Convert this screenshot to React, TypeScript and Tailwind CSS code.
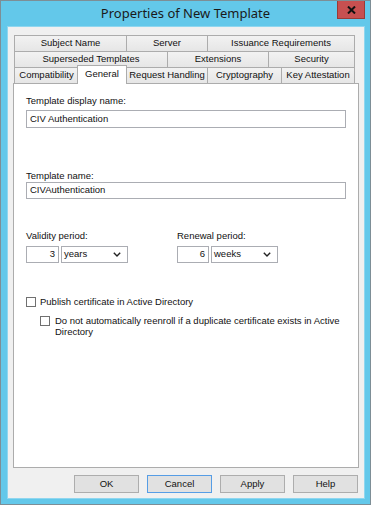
import React from 'react';

const UI = "font-['Liberation_Sans',Arial,sans-serif] text-[9.5px] text-[#111]";

type Tab = { label: string; w: number; selected?: boolean };

const ROW1: Tab[] = [
  { label: 'Subject Name', w: 112 },
  { label: 'Server', w: 81 },
  { label: 'Issuance Requirements', w: 148 },
];
const ROW2: Tab[] = [
  { label: 'Superseded Templates', w: 153 },
  { label: 'Extensions', w: 101 },
  { label: 'Security', w: 87 },
];
const ROW3: Tab[] = [
  { label: 'Compatibility', w: 64 },
  { label: 'General', w: 48, selected: true },
  { label: 'Request Handling', w: 81 },
  { label: 'Cryptography', w: 74 },
  { label: 'Key Attestation', w: 74 },
];

function TabRow({ tabs }: { tabs: Tab[] }) {
  return (
    <div className="flex h-[16px] items-start">
      {tabs.map((t, i) =>
        t.selected ? (
          <div
            key={t.label}
            style={{ width: t.w + 2 }}
            className="relative z-10 -mx-px -mt-[2px] flex h-[19px] items-center justify-center border-x border-t border-[#acacac] bg-white pb-[2px]"
          >
            {t.label}
          </div>
        ) : (
          <div
            key={t.label}
            style={{ width: t.w }}
            className={`flex h-[16px] items-center justify-center border-l border-t border-[#acacac] bg-gradient-to-b from-[#f2f2f2] to-[#e6e6e6] ${
              i === tabs.length - 1 ? 'border-r' : ''
            }`}
          >
            {t.label}
          </div>
        ),
      )}
    </div>
  );
}

function Chevron() {
  return (
    <svg width="8" height="5" viewBox="0 0 8 5" className="shrink-0">
      <path d="M0.8 0.8 L4 4 L7.2 0.8" fill="none" stroke="#222" strokeWidth="1.4" />
    </svg>
  );
}

function Period({ value, unit, numW }: { value: string; unit: string; numW: number }) {
  return (
    <div className="flex h-[17px] gap-[2px]">
      <div
        style={{ width: numW }}
        className="flex items-center justify-end border border-[#abadb3] bg-white pr-[3px]"
      >
        {value}
      </div>
      <div className="flex w-[67px] items-center justify-between border border-[#abadb3] bg-white pl-[2px] pr-[6px]">
        <span>{unit}</span>
        <Chevron />
      </div>
    </div>
  );
}

function Checkbox() {
  return <div className="mt-[1px] h-[10px] w-[10px] shrink-0 border border-[#707070] bg-white" />;
}

function Button({ label, focused }: { label: string; focused?: boolean }) {
  return (
    <div
      className={`flex h-[18px] w-[65px] items-center justify-center border bg-[#e1e1e1] ${
        focused ? 'border-[#569de5]' : 'border-[#adadad]'
      }`}
    >
      {label}
    </div>
  );
}

export default function App() {
  return (
    <div className={`flex h-[505px] w-[371px] flex-col border border-[#7d8e96] bg-[#63c8ea] ${UI}`}>
      <div className="relative flex h-[25px] shrink-0 items-center justify-center">
        <span className="font-['Noto_Sans',sans-serif] text-[13px] leading-none text-[#1a1a1a]">
          Properties of New Template
        </span>
        <div className="absolute right-[5px] top-0 flex h-[18px] w-[28px] items-center justify-center border border-t-0 border-[#9a3b36] bg-[#c75050]">
          <svg width="9" height="8" viewBox="0 0 9 8">
            <path d="M1 0.5 L8 7.5 M8 0.5 L1 7.5" stroke="#111" strokeWidth="2" />
          </svg>
        </div>
      </div>

      <div className="ml-[6px] mr-[5px] flex h-[473px] flex-col border border-[#8fd6ef] bg-[#f0f0f0] px-[5px] pb-[5px] pt-[8px]">
        <div className="ml-px">
          <TabRow tabs={ROW1} />
          <TabRow tabs={ROW2} />
          <TabRow tabs={ROW3} />
        </div>

        <div className="flex h-[385px] flex-col border border-[#acacac] bg-white px-[12px]">
          <div className="mt-[11px] h-[12px] leading-[12px]">Template display name:</div>
          <div className="mt-[3px] flex h-[18px] w-[320px] items-center border border-[#abadb3] pl-[3px]">
            CIV Authentication
          </div>

          <div className="mt-[42px] h-[12px] leading-[12px]">Template name:</div>
          <div className="flex h-[17px] w-[320px] items-center border border-[#abadb3] pl-[3px]">
            CIVAuthentication
          </div>

          <div className="mt-[31px] flex">
            <div className="w-[151px]">
              <div className="h-[12px] leading-[12px]">Validity period:</div>
              <div className="mt-[4px]">
                <Period value="3" unit="years" numW={33} />
              </div>
            </div>
            <div>
              <div className="h-[12px] leading-[12px]">Renewal period:</div>
              <div className="mt-[4px]">
                <Period value="6" unit="weeks" numW={32} />
              </div>
            </div>
          </div>

          <div className="mt-[33px] flex items-start gap-[4px] leading-[12px]">
            <Checkbox />
            <span>Publish certificate in Active Directory</span>
          </div>
          <div className="ml-[14px] mt-[7px] flex items-start gap-[5px] leading-[11px]">
            <Checkbox />
            <span>
              Do not automatically reenroll if a duplicate certificate exists in Active
              <br />
              Directory
            </span>
          </div>
        </div>

        <div className="mr-px mt-[7px] flex justify-end gap-[8px]">
          <Button label="OK" />
          <Button label="Cancel" focused />
          <Button label="Apply" />
          <Button label="Help" />
        </div>
      </div>
    </div>
  );
}
